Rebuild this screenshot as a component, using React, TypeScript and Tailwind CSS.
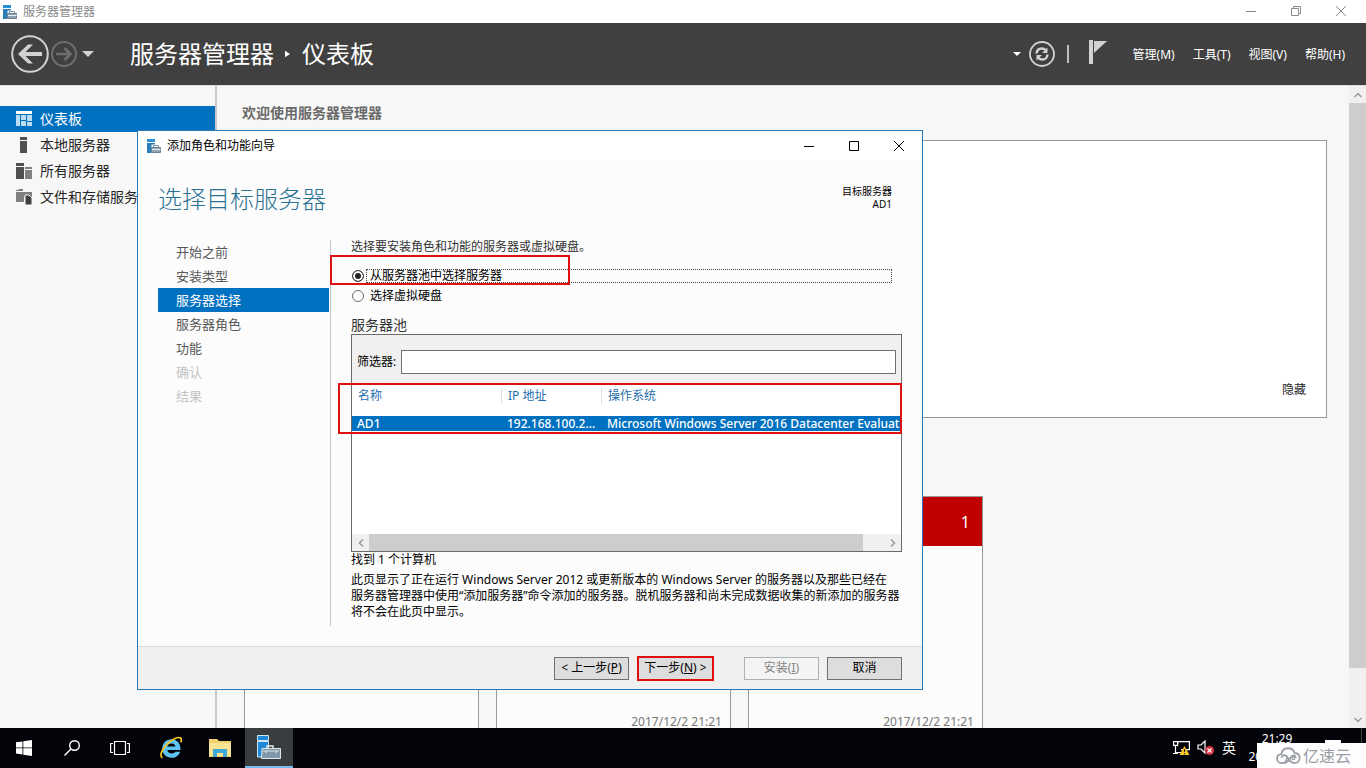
import { useState } from 'react';
import type { ReactNode } from 'react';

const SIDE_ITEMS = [
  { id: 'dashboard', label: '仪表板' },
  { id: 'local', label: '本地服务器' },
  { id: 'all', label: '所有服务器' },
  { id: 'files', label: '文件和存储服务' },
];

const STEPS = [
  { label: '开始之前' },
  { label: '安装类型' },
  { label: '服务器选择' },
  { label: '服务器角色' },
  { label: '功能' },
  { label: '确认', disabled: true },
  { label: '结果', disabled: true },
];

const MENUS = ['管理(M)', '工具(T)', '视图(V)', '帮助(H)'];

const ServerIcon = ({ className = '' }: { className?: string }) => (
  <svg viewBox="0 0 14 14" className={className} aria-hidden="true">
    <path d="M0 0h8v3H0z" fill="#2b8fd6" />
    <path d="M0 4h8v1.500H4.500V14H0z" fill="#2b7fb8" />
    <path d="M6.500 8V6.500h5V8" fill="none" stroke="#7d93a6" />
    <path d="M4.500 8.500h9v5h-9z" fill="#8fa3b5" stroke="#6b8296" />
    <path d="M5 10.500h8.500" stroke="#e6edf2" />
  </svg>
);

const SideIcon = ({ id }: { id: string }) => {
  if (id === 'dashboard') {
    return (
      <svg viewBox="0 0 16 16" className="size-4" aria-hidden="true">
        <path d="M0 0h16v3H0z" fill="#fff" />
        <path d="M0 4h4v11H0zM5 4h5v5H5zM11 4h5v6h-5zM5 10h5v5H5zM11 11h5v4h-5z" fill="#b9dbf3" />
      </svg>
    );
  }
  if (id === 'local') {
    return (
      <svg viewBox="0 0 16 16" className="size-4" aria-hidden="true">
        <path d="M4 0h7v3H4zM4 4h7v12H4z" fill="#505050" />
      </svg>
    );
  }
  if (id === 'all') {
    return (
      <svg viewBox="0 0 16 16" className="size-4" aria-hidden="true">
        <path d="M0 0h8v3H0zM0 4h8v12H0z" fill="#505050" />
        <path d="M9 4h7v2H9zM9 7h7v9H9z" fill="#808080" />
      </svg>
    );
  }
  return (
    <svg viewBox="0 0 16 16" className="size-4" aria-hidden="true">
      <path d="M0 1h2l1-1h4v2H0zM0 3h8v10H0z" fill="#808080" />
      <path d="M8 3h8v10h-1l-3-5H8z" fill="#808080" />
      <path d="M9 6h4l3 3v7H9z" fill="#404040" stroke="#f7f7f7" />
    </svg>
  );
};

const WindowButtons = ({ maximized = false }: { maximized?: boolean }) => (
  <div className="flex">
    <button aria-label="最小化" className="flex w-[45px] items-center justify-center">
      <svg viewBox="0 0 12 12" className="size-3" stroke="currentColor" fill="none">
        <path d="M1 6.500h10" />
      </svg>
    </button>
    <button aria-label="最大化" className="flex w-[45px] items-center justify-center">
      <svg viewBox="0 0 12 12" className="size-3" stroke="currentColor" fill="none">
        {maximized ? <path d="M1.500 3.500h7v7h-7zM3.500 3.500v-2h7v7h-2" /> : <path d="M1.500 1.500h9v9h-9z" />}
      </svg>
    </button>
    <button aria-label="关闭" className="flex w-[46px] items-center justify-center">
      <svg viewBox="0 0 12 12" className="size-3" stroke="currentColor" fill="none">
        <path d="M1 1l10 10M11 1L1 11" />
      </svg>
    </button>
  </div>
);

const Header = () => (
  <header className="flex h-[62px] shrink-0 items-center bg-[#404040] pr-[21px] pl-[11px] text-white">
    <button aria-label="后退">
      <svg viewBox="0 0 38 38" className="size-[38px]" fill="none">
        <circle cx="19" cy="19" r="17.800" stroke="#d2d2d2" strokeWidth="2" />
        <path d="M31 19H10" stroke="#d2d2d2" strokeWidth="4" />
        <path d="M7 19l10-9.500h5L12.500 19l9.500 9.500h-5z" fill="#d2d2d2" />
      </svg>
    </button>
    <button aria-label="前进" className="ml-[2px]">
      <svg viewBox="0 0 26 26" className="size-[26px]" fill="none" stroke="#6e6e6e">
        <circle cx="13" cy="13" r="12" strokeWidth="2" />
        <path d="M5 13h14M13.500 7l6 6-6 6" strokeWidth="2.500" />
      </svg>
    </button>
    <button aria-label="历史记录" className="ml-[5px]">
      <svg viewBox="0 0 12 6" className="h-[6px] w-3" fill="#d2d2d2">
        <path d="M0 0h12L6 6z" />
      </svg>
    </button>
    <h1 className="ml-9 flex items-center text-2xl font-normal">
      <span>服务器管理器</span>
      <svg viewBox="0 0 6 8" className="mr-3 ml-[11px] h-2 w-[5px]" fill="#fff">
        <path d="M0 0l6 4-6 4z" />
      </svg>
      <span>仪表板</span>
    </h1>
    <div className="ml-auto flex items-center">
      <svg viewBox="0 0 8 4" className="h-1 w-2" fill="#fff">
        <path d="M0 0h8L4 4z" />
      </svg>
      <button aria-label="刷新" className="ml-2">
        <svg viewBox="0 0 26 26" className="size-[26px]" fill="none" stroke="#d2d2d2">
          <circle cx="13" cy="13" r="12" strokeWidth="1.800" />
          <path d="M7.500 12.500c.3-3 2.500-5 5.300-5 1.700 0 3 .7 4 1.800M18.500 13.500c-.3 3-2.500 5-5.300 5-1.700 0-3-.7-4-1.800" strokeWidth="2.400" />
          <path d="M18.500 6.500v5.500H13zM7.500 19.500V14H13z" fill="#d2d2d2" stroke="none" />
        </svg>
      </button>
      <span className="ml-3 h-[18px] w-[2px] bg-[#bdbdbd]" />
      <button aria-label="通知" className="-mt-1 ml-5">
        <svg viewBox="0 0 18 24" className="h-6 w-[18px]" fill="#d2d2d2">
          <path d="M0 0h4v24H0zM5 1h13L5 13z" />
        </svg>
      </button>
      <nav className="ml-[26px] flex gap-[18px] pt-[2px] text-xs">
        {MENUS.map((m) => (
          <button key={m}>{m}</button>
        ))}
      </nav>
    </div>
  </header>
);

const Tile = ({ date }: { date?: string }) => (
  <div className="flex w-[235px] flex-col border border-[#999] bg-[#fcfcfc]">
    <div className="flex h-[49px] items-center justify-end bg-[#c00000] pr-3 text-base text-white">1</div>
    <div className="mt-[170px] pr-2 text-right text-xs leading-3 text-[#777]">{date}</div>
  </div>
);

const DialogButton = ({ children, disabled = false }: { children: ReactNode; disabled?: boolean }) => (
  <button
    disabled={disabled}
    className="h-[23px] w-[75px] border border-[#707070] bg-[#dddddd] text-xs whitespace-nowrap disabled:border-[#adb2b5] disabled:bg-[#f4f4f4] disabled:text-[#838383]"
  >
    {children}
  </button>
);

const Wizard = () => {
  const [source, setSource] = useState('pool');
  const radio =
    'size-3 appearance-none rounded-full border border-[#707070] bg-white checked:border-[#444] checked:bg-[#222] checked:shadow-[inset_0_0_0_2px_white]';

  return (
    <section className="absolute top-[130px] left-[137px] w-[786px] border border-[#2a7ab8] bg-[#fcfcfc] text-xs text-black">
      <div className="flex h-[30px] items-stretch bg-white pl-[9px]">
        <ServerIcon className="size-[14px] self-center" />
        <h2 className="ml-[6px] flex-1 self-center">添加角色和功能向导</h2>
        <WindowButtons />
      </div>

      <div className="flex h-[79px] justify-between pr-[30px] pl-5">
        <h3 className="pt-[22px] text-2xl font-light text-[#2a7294]">选择目标服务器</h3>
        <p className="pt-6 text-right text-[10px] leading-[13px]">
          目标服务器
          <br />
          AD1
        </p>
      </div>

      <div className="flex pr-5 pl-5">
        <ol className="min-h-[386px] w-[173px] shrink-0 border-r border-[#c4c8cc] pr-[1px] text-[13px]">
          {STEPS.map((s) => (
            <li key={s.label}>
              <button
                disabled={s.disabled}
                className={`h-6 w-full pt-[2px] pl-[18px] text-left ${
                  s.label === '服务器选择' ? 'bg-[#0070c0] text-white' : s.disabled ? 'text-[#c3c3c3]' : 'text-[#595959]'
                }`}
              >
                {s.label}
              </button>
            </li>
          ))}
        </ol>

        <div className="min-w-0 flex-1 pl-5">
          <p className="leading-[14px] text-[#333]">选择要安装角色和功能的服务器或虚拟硬盘。</p>

          <div className="relative mt-[15px] flex h-[14px] items-center pl-[1px]">
            <input
              id="src-pool"
              type="radio"
              name="source"
              className={radio}
              checked={source === 'pool'}
              onChange={() => setSource('pool')}
            />
            <label
              htmlFor="src-pool"
              className="mr-[10px] ml-[2px] h-[14px] flex-1 border border-dotted border-[#444] pl-[3px] leading-3"
            >
              从服务器池中选择服务器
            </label>
            <div className="pointer-events-none absolute -top-[14px] -left-[21px] h-[30px] w-[240px] border-2 border-[#dd1111]" />
          </div>
          <div className="mt-[6px] flex h-[14px] items-center pl-[1px]">
            <input
              id="src-vhd"
              type="radio"
              name="source"
              className={radio}
              checked={source === 'vhd'}
              onChange={() => setSource('vhd')}
            />
            <label htmlFor="src-vhd" className="ml-[6px] leading-[14px]">
              选择虚拟硬盘
            </label>
          </div>

          <h4 className="mt-[13px] text-sm leading-[18px] text-[#333]">服务器池</h4>
          <div className="relative border border-[#6b6b6b] bg-[#f0f0f0]">
            <div className="flex items-center pt-[15px] pr-[5px] pb-[10px] pl-[5px]">
              <label htmlFor="filter" className="w-11 whitespace-nowrap">
                筛选器:
              </label>
              <input id="filter" type="text" className="h-6 min-w-0 flex-1 border border-[#707070] bg-white px-1" />
            </div>
            <div className="h-[150px] overflow-hidden bg-white">
              <table className="w-full table-fixed border-collapse text-left whitespace-nowrap">
                <colgroup>
                  <col className="w-[149px]" />
                  <col className="w-[100px]" />
                  <col />
                </colgroup>
                <thead className="text-[#1f6cab]">
                  <tr className="h-8 align-top">
                    <th className="p-0 pt-1 font-normal">
                      <span className="block pl-[6px] leading-4">名称</span>
                    </th>
                    <th className="p-0 pt-1 font-normal">
                      <span className="block border-l border-[#e0e0e0] pl-[6px] leading-4">IP 地址</span>
                    </th>
                    <th className="p-0 pt-1 font-normal">
                      <span className="block border-l border-[#e0e0e0] pl-[6px] leading-4">操作系统</span>
                    </th>
                  </tr>
                </thead>
                <tbody>
                  <tr className="bg-[#0070c0] leading-[15px] font-medium text-white">
                    <td className="p-0 pl-[5px]">AD1</td>
                    <td className="p-0 pl-[6px]">192.168.100.2...</td>
                    <td className="overflow-hidden p-0 pl-[6px]">Microsoft Windows Server 2016 Datacenter Evaluation</td>
                  </tr>
                </tbody>
              </table>
            </div>
            <div className="flex h-[17px] text-[#999]">
              <button aria-label="向左滚动" className="flex w-[17px] items-center justify-center">
                <svg viewBox="0 0 6 8" className="h-2 w-[6px]" fill="none" stroke="currentColor" strokeWidth="1.500">
                  <path d="M5 0.500L1.500 4 5 7.500" />
                </svg>
              </button>
              <div className="flex-1">
                <div className="h-full w-[96%] bg-[#cdcdcd]" />
              </div>
              <button aria-label="向右滚动" className="flex w-[17px] items-center justify-center">
                <svg viewBox="0 0 6 8" className="h-2 w-[6px]" fill="none" stroke="currentColor" strokeWidth="1.500">
                  <path d="M1 0.500L4.500 4 1 7.500" />
                </svg>
              </button>
            </div>
            <div className="pointer-events-none absolute top-12 -right-[1px] -left-[14px] h-[51px] border-2 border-[#dd1111]" />
          </div>

          <p className="leading-4">找到 1 个计算机</p>
          <p className="mt-1 leading-4 whitespace-nowrap">
            此页显示了正在运行 Windows Server 2012 或更新版本的 Windows Server 的服务器以及那些已经在
            <br />
            服务器管理器中使用“添加服务器”命令添加的服务器。脱机服务器和尚未完成数据收集的新添加的服务器
            <br />
            将不会在此页中显示。
          </p>
        </div>
      </div>

      <div className="mt-5 flex h-[43px] items-center justify-end border-t border-[#dcdcdc] bg-[#f0f0f0] pr-5">
        <DialogButton>
          &lt; 上一步(<u>P</u>)
        </DialogButton>
        <div className="relative mr-[31px] ml-[9px]">
          <DialogButton>
            下一步(<u>N</u>) &gt;
          </DialogButton>
          <div className="pointer-events-none absolute -inset-[1px] border-2 border-[#dd1111]" />
        </div>
        <DialogButton disabled>
          安装(<u>I</u>)
        </DialogButton>
        <div className="ml-2 flex">
          <DialogButton>取消</DialogButton>
        </div>
      </div>
    </section>
  );
};

const Taskbar = () => (
  <footer className="relative flex h-10 shrink-0 items-stretch bg-[#020409] text-white">
    <button aria-label="开始" className="flex w-12 items-center justify-center">
      <svg viewBox="0 0 16 16" className="size-4" fill="#fff">
        <path d="M0 2.300l6.500-.9v6.100H0zM7.300 1.300L16 0v7.500H7.300zM0 8.300h6.500v6.200L0 13.600zM7.300 8.300H16V16l-8.700-1.300z" />
      </svg>
    </button>
    <button aria-label="搜索" className="flex w-12 items-center justify-center">
      <svg viewBox="0 0 16 16" className="size-4" fill="none" stroke="#fff" strokeWidth="1.400">
        <circle cx="10.500" cy="5.500" r="4.800" />
        <path d="M7 9L.5 15.500" />
      </svg>
    </button>
    <button aria-label="任务视图" className="flex w-12 items-center justify-center">
      <svg viewBox="0 0 20 16" className="h-4 w-5" fill="none" stroke="#fff" strokeWidth="1.200">
        <path d="M4.500 1.500h11v13h-11zM3 3.500H.6v9H3M17 3.500h2.400v9H17" />
      </svg>
    </button>
    <button aria-label="Internet Explorer" className="flex w-[54px] items-center justify-center">
      <svg viewBox="0 0 24 24" className="size-6" fill="none">
        <path
          d="M21.500 14H8.300c.3 2.200 2 3.400 4.400 3.400 1.700 0 3-.5 3.800-1.700h4.700c-1.200 3.700-4.500 6.100-8.600 6.100-5.400 0-9.300-3.800-9.300-9.300 0-5.400 3.900-9.300 9.300-9.300 5.500 0 9.200 4.200 8.900 10.800zM8.400 10.600h8c-.2-2-1.700-3.200-3.900-3.200s-3.800 1.200-4.100 3.200z"
          fill="#5cc4f2"
        />
        <path d="M3.500 22C.5 20.500 2 14.500 7.500 8.800 12.500 3.500 19.300.2 21.600 2c1 .8.900 2.500.1 4.400" stroke="#f5c52a" strokeWidth="1.700" />
      </svg>
    </button>
    <button aria-label="文件资源管理器" className="flex w-[44px] items-center justify-center">
      <svg viewBox="0 0 22 20" className="h-5 w-[22px]">
        <path d="M0 1h8l2 2h12v16H0z" fill="#f3d170" />
        <path d="M0 5h22v13H0z" fill="#fbe394" />
        <path d="M4 11h14v8h-4v-4H8v4H4z" fill="#3fa9d8" />
      </svg>
    </button>
    <button
      aria-label="服务器管理器"
      className="ml-[3px] flex w-12 items-center justify-center border-b-2 border-[#76b9ed] bg-[#3a3d40]"
    >
      <svg viewBox="0 0 24 24" className="size-6">
        <path d="M.5.500h11v5H.5zM.5 6.500h11V22H.5z" fill="#2088d8" stroke="#cfe6f6" />
        <path d="M10 13v-2h6v2" fill="none" stroke="#dfe6ea" strokeWidth="1.500" />
        <path d="M5 13.500h18.500v10H4.500z" fill="#7f97a8" stroke="#dfe6ea" />
        <path d="M6 16h16M9 16v2M19 16v2" stroke="#dfe6ea" strokeWidth="1.200" />
      </svg>
    </button>

    <div className="ml-auto flex items-center pr-[58px]">
      <svg viewBox="0 0 18 16" className="h-4 w-[18px]" fill="none" stroke="#fff" strokeWidth="1.200">
        <path d="M5 3.500V1.600h11.400v8H8M.6 1.600h4v3.800h-4zM2.500 5.500v8M2.500 12.500h6M0 13.500h5" />
        <path d="M11.500 6l5 9h-10z" fill="#ffc824" stroke="none" />
        <path d="M11.500 9v3M11.500 13v1.200" stroke="#222" />
      </svg>
      <svg viewBox="0 0 18 16" className="ml-[6px] h-4 w-[18px]" fill="none">
        <path d="M1 5h3l4-4v12l-4-4H1z" stroke="#fff" strokeWidth="1.200" />
        <circle cx="12.500" cy="10.500" r="4.500" fill="#d8303e" />
        <path d="M10.500 8.500l4 4M14.500 8.500l-4 4" stroke="#fff" strokeWidth="1.200" />
      </svg>
      <span className="ml-[7px] text-sm">英</span>
      <time className="ml-[10px] w-[62px] text-center text-xs leading-[18px] whitespace-nowrap">
        21:29
        <br />
        2017/12/2
      </time>
    </div>
    <svg viewBox="0 0 16 6" className="absolute top-3 right-[25px] h-[6px] w-4">
      <path d="M0 0h16v6H0z" fill="#fff" />
    </svg>
    <span className="absolute top-0 right-1 h-full w-px bg-[#3c4044]" />

    <div className="absolute right-0 bottom-0 flex h-[25px] w-[109px] items-center justify-center gap-[2px] bg-[#fdfdfd] pl-1 text-[#9a9ea6]">
      <svg viewBox="0 0 28 20" className="h-[18px] w-[25px]" fill="none" stroke="currentColor" strokeWidth="2">
        <path d="M12 12.500c0 3.200-2.300 5.500-5.300 5.500S1.200 15.800 1.200 13s2-4.800 4.800-5C6.600 4 9.600 1.300 13.600 1.300c3.600 0 6.300 2 7.200 5.200 3.300.3 5.700 2.500 5.700 5.700 0 3.300-2.400 5.800-5.700 5.800-4.800 0-6.300-5-9.300-8-2-1.900-5.300-.8-5.300 2" />
        <path d="M22 12c0-1.700-1.300-2.700-2.800-2.700-3.400 0-3.700 8.700-10.200 8.500" />
        <circle cx="19.500" cy="12.500" r="1.500" strokeWidth="1.500" />
      </svg>
      <span className="text-base">亿速云</span>
    </div>
  </footer>
);

export default function App() {
  const [active, setActive] = useState('dashboard');

  return (
    <div className="relative flex h-screen flex-col overflow-hidden bg-[#f7f7f7] font-['Noto_Sans','Noto_Sans_CJK_SC',sans-serif]">
      <div className="flex h-[23px] shrink-0 items-stretch bg-white pr-[2px] pl-[3px] text-[#8a8a8a]">
        <ServerIcon className="size-[14px] self-center" />
        <span className="ml-[6px] flex-1 self-center text-xs">服务器管理器</span>
        <div className="-mt-[2px] flex">
          <WindowButtons maximized />
        </div>
      </div>
      <Header />

      <div className="flex min-h-0 flex-1 border-t border-[#dcdcdc]">
        <aside className="w-[217px] shrink-0 border-r-2 border-[#c8c8cc] pt-5">
          {SIDE_ITEMS.map((item) => (
            <button
              key={item.id}
              onClick={() => setActive(item.id)}
              className={`flex h-[26px] w-full items-center gap-2 pl-4 text-sm whitespace-nowrap ${
                active === item.id ? 'bg-[#0070c0] text-white' : 'text-[#262626]'
              }`}
            >
              <SideIcon id={item.id} />
              {item.label}
            </button>
          ))}
        </aside>

        <main className="min-w-0 flex-1 overflow-hidden pr-[22px] pl-[25px]">
          <h2 className="pt-[17px] text-sm leading-5 font-bold text-[#6a6a6a]">欢迎使用服务器管理器</h2>
          <div className="pl-[2px]">
            <div className="mt-[17px] flex h-[278px] items-end justify-end border border-[#999] bg-white px-5 pb-[19px]">
              <button className="text-xs text-[#262626]">隐藏</button>
            </div>
            <div className="mt-[78px] flex h-[260px] gap-[17px]">
              <Tile />
              <Tile date="2017/12/2 21:21" />
              <Tile date="2017/12/2 21:21" />
            </div>
          </div>
        </main>

        <div className="flex w-[17px] flex-col bg-[#f0f0f0] text-[#999]">
          <button aria-label="向上滚动" className="flex h-[17px] items-center justify-center">
            <svg viewBox="0 0 8 6" className="h-[6px] w-2" fill="none" stroke="currentColor" strokeWidth="1.500">
              <path d="M0.500 5L4 1.500 7.500 5" />
            </svg>
          </button>
          <div className="flex-1">
            <div className="h-[93%] bg-[#cdcdcd]" />
          </div>
          <button aria-label="向下滚动" className="flex h-[17px] items-center justify-center">
            <svg viewBox="0 0 8 6" className="h-[6px] w-2" fill="none" stroke="currentColor" strokeWidth="1.500">
              <path d="M0.500 1L4 4.500 7.500 1" />
            </svg>
          </button>
        </div>
      </div>

      <Taskbar />
      <Wizard />
    </div>
  );
}
